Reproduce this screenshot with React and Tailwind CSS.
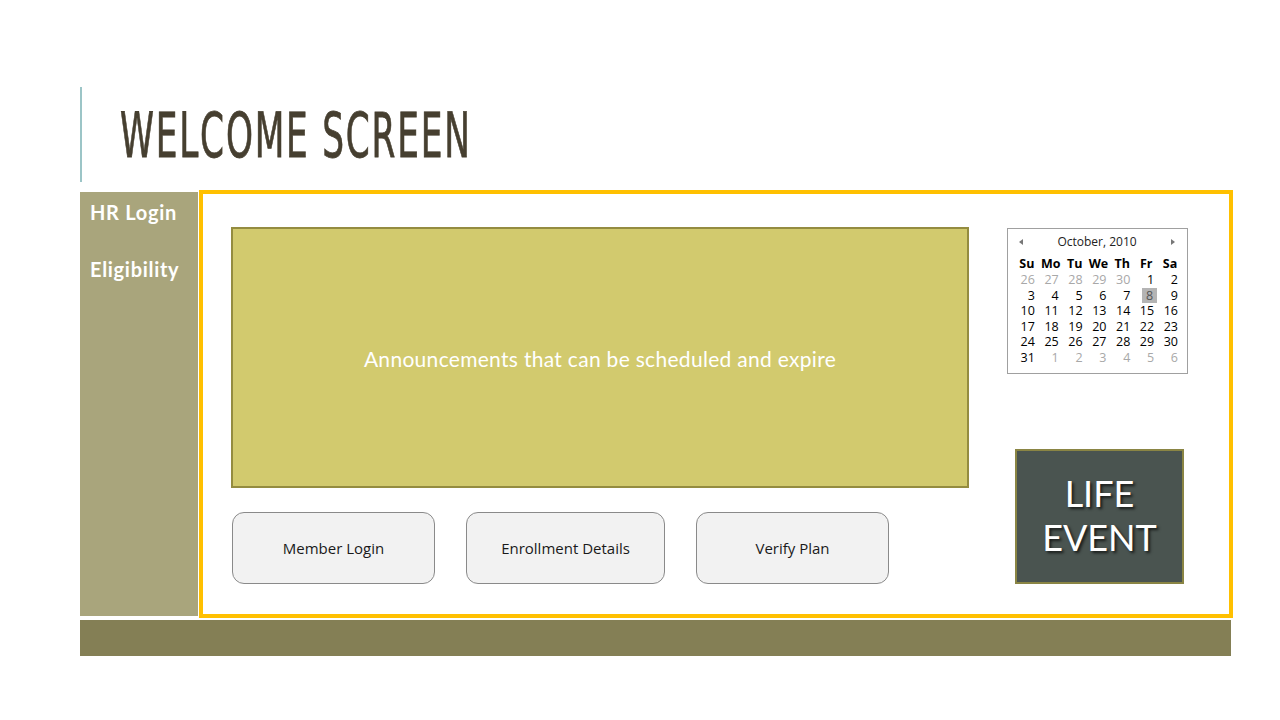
const weeks = [
  [[26, 0], [27, 0], [28, 0], [29, 0], [30, 0], [1, 1], [2, 1]],
  [[3, 1], [4, 1], [5, 1], [6, 1], [7, 1], [8, 2], [9, 1]],
  [[10, 1], [11, 1], [12, 1], [13, 1], [14, 1], [15, 1], [16, 1]],
  [[17, 1], [18, 1], [19, 1], [20, 1], [21, 1], [22, 1], [23, 1]],
  [[24, 1], [25, 1], [26, 1], [27, 1], [28, 1], [29, 1], [30, 1]],
  [[31, 1], [1, 0], [2, 0], [3, 0], [4, 0], [5, 0], [6, 0]],
]

const dayNames = ['Su', 'Mo', 'Tu', 'We', 'Th', 'Fr', 'Sa']

function Calendar() {
  return (
    <div className="w-[181px] h-[146px] border border-[#a0a0a0] bg-white font-['Open_Sans',sans-serif] text-[12.5px] text-black">
      <div className="flex items-center justify-between h-[27px] pl-[11px] pr-[12px] pb-[2px]">
        <span className="w-0 h-0 border-y-[3px] border-y-transparent border-r-[4px] border-r-[#777]" />
        <span className="text-[12px] text-[#222]">October, 2010</span>
        <span className="w-0 h-0 border-y-[3px] border-y-transparent border-l-[4px] border-l-[#777]" />
      </div>
      <div className="pl-[7px] pr-[5px]">
        <div className="grid grid-cols-7 h-[16px] leading-[16px] font-bold">
          {dayNames.map(d => (
            <span key={d} className="text-center">{d}</span>
          ))}
        </div>
        {weeks.map((week, i) => (
          <div key={i} className="grid grid-cols-7 h-[15.6px] leading-[15.6px]">
            {week.map(([n, kind], j) => (
              <span key={j} className="flex justify-end pr-[4px]">
                <span className={
                  kind === 0 ? 'text-[#a8a8a8]'
                    : kind === 2 ? 'bg-[#b4b4b4] text-[#555] px-[4px] -mr-[3px]'
                      : 'text-black'
                }>{n}</span>
              </span>
            ))}
          </div>
        ))}
      </div>
    </div>
  )
}

function NavButton({ label, width }) {
  return (
    <div className={`${width} h-[72px] rounded-[12px] border border-[#8a8a8a] bg-[#f2f2f2] flex items-center justify-center text-[15px] text-[#1a1a1a] font-['Open_Sans',sans-serif]`}>
      {label}
    </div>
  )
}

export default function App() {
  return (
    <div className="w-[1280px] h-[720px] bg-white overflow-hidden">
      <div className="pt-[87px] pl-[80px]">
        <div className="h-[95px] border-l-2 border-[#9cc5c7] pl-[38px] flex items-center">
          <h1 className="inline-block origin-left scale-x-[0.605] font-['DejaVu_Sans_Condensed','DejaVu_Sans',sans-serif] text-[63px] leading-none tracking-[3px] [-webkit-text-stroke:0.8px_#463f30] text-[#463f30] whitespace-nowrap mt-[2px]">
            WELCOME SCREEN
          </h1>
        </div>

        <div className="flex items-start mt-[8px]">
          <div className="w-[118px] h-[424px] mt-[2px] bg-[#a9a57c] pl-[10px] pt-[9px] font-['Lato',sans-serif] font-bold text-white text-[20px] tracking-[0.7px]">
            <div className="h-[22px] leading-[22px]">HR Login</div>
            <div className="h-[22px] leading-[22px] mt-[35px]">Eligibility</div>
          </div>

          <div className="ml-[1px] w-[1034px] h-[428px] border-4 border-[#ffc000] bg-white flex pl-[28px] pt-[33px]">
            <div className="w-[738px]">
              <div className="h-[261px] bg-[#d2ca6e] border-2 border-[#948c40] flex items-center justify-center pt-[3px]">
                <span className="text-white text-[21px] tracking-[0.3px] font-['Lato',sans-serif]">
                  Announcements that can be scheduled and expire
                </span>
              </div>
              <div className="flex mt-[24px] ml-[1px] gap-[31px]">
                <NavButton label="Member Login" width="w-[203px]" />
                <NavButton label="Enrollment Details" width="w-[199px]" />
                <NavButton label="Verify Plan" width="w-[193px]" />
              </div>
            </div>

            <div className="ml-[38px] mt-[1px] flex flex-col">
              <Calendar />
              <div className="ml-[8px] mt-[75px] w-[169px] h-[135px] bg-[#4a5450] border-2 border-[#8a8544] flex items-center justify-center text-center font-['Lato',sans-serif] text-white text-[36px] leading-[44px] [text-shadow:2px_2px_3px_rgba(0,0,0,0.7)] pb-[4px]">
                <p>LIFE<br />EVENT</p>
              </div>
            </div>
          </div>
        </div>

        <div className="w-[1151px] h-[36px] mt-[2px] bg-[#847f55]" />
      </div>
    </div>
  )
}
